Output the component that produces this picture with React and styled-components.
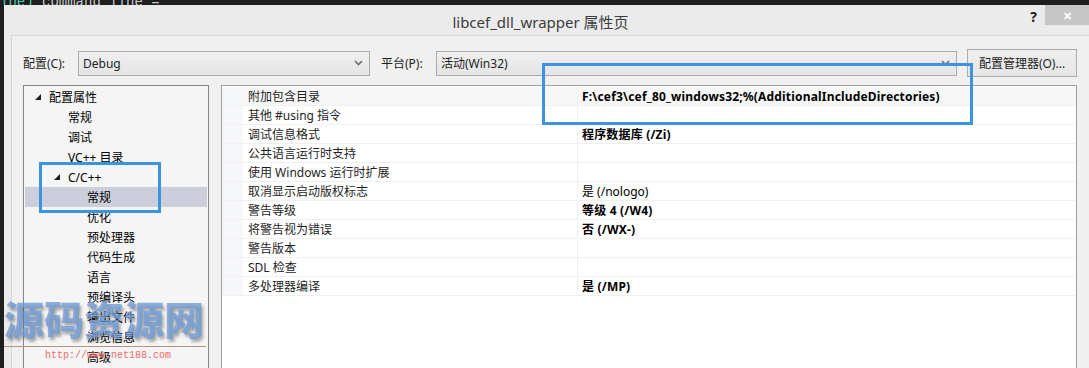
import styled, { createGlobalStyle } from 'styled-components';

const UI_FONT = `"Segoe UI", "Noto Sans", "Noto Sans CJK SC", sans-serif`;

const GlobalStyle = createGlobalStyle`
    html, body {
        margin: 0;
        padding: 0;
        width: 1089px;
        height: 368px;
        overflow: hidden;
        background: #1e1e1e;
    }
    * { box-sizing: border-box; }
`;

const treeItems = [
    { label: "配置属性", level: 0, open: true },
    { label: "常规", level: 1 },
    { label: "调试", level: 1 },
    { label: "VC++ 目录", level: 1 },
    { label: "C/C++", level: 1, open: true },
    { label: "常规", level: 2, selected: true },
    { label: "优化", level: 2 },
    { label: "预处理器", level: 2 },
    { label: "代码生成", level: 2 },
    { label: "语言", level: 2 },
    { label: "预编译头", level: 2 },
    { label: "输出文件", level: 2 },
    { label: "浏览信息", level: 2 },
    { label: "高级", level: 2 },
];

const props = [
    ["附加包含目录", "F:\\cef3\\cef_80_windows32;%(AdditionalIncludeDirectories)", true],
    ["其他 #using 指令", "", false],
    ["调试信息格式", "程序数据库 (/Zi)", true],
    ["公共语言运行时支持", "", false],
    ["使用 Windows 运行时扩展", "", false],
    ["取消显示启动版权标志", "是 (/nologo)", false],
    ["警告等级", "等级 4 (/W4)", true],
    ["将警告视为错误", "否 (/WX-)", true],
    ["警告版本", "", false],
    ["SDL 检查", "", false],
    ["多处理器编译", "是 (/MP)", true],
];

function Triangle() {
    return (
        <svg width="6" height="6" viewBox="0 0 6 6">
            <polygon points="6,0 6,6 0,6" fill="#1e1e1e" />
        </svg>
    );
}

function Chevron() {
    return (
        <svg width="9" height="6" viewBox="0 0 9 6">
            <polyline points="1,1 4.5,4.5 8,1" fill="none" stroke="#6d6d6d" strokeWidth="1.6" />
        </svg>
    );
}

export default function App() {
    return (
        <Page>
            <GlobalStyle />
            <TopStrip>
                <span className="green">ine)</span> command line =
            </TopStrip>
            <Desk>
                <LeftStrip />
                <Window>
                    <TitleBar>
                        <Title>libcef_dll_wrapper 属性页</Title>
                        <Help>?</Help>
                        <Close>✕</Close>
                    </TitleBar>
                    <Body>
                        <Toolbar>
                            <Label>配置(C):</Label>
                            <Select width={292}>
                                <span>Debug</span>
                                <Chevron />
                            </Select>
                            <Label style={{ marginLeft: 11 }}>平台(P):</Label>
                            <Select width={521}>
                                <span>活动(Win32)</span>
                                <Chevron />
                            </Select>
                            <Button>配置管理器(O)...</Button>
                        </Toolbar>
                        <Panels>
                            <Tree>
                                {treeItems.map((it, i) => (
                                    <TreeRow key={i} level={it.level} selected={it.selected}>
                                        <Twisty>{it.open && <Triangle />}</Twisty>
                                        {it.label}
                                    </TreeRow>
                                ))}
                            </Tree>
                            <Grid>
                                {props.map(([name, value, bold], i) => (
                                    <PropRow key={i} first={i === 0}>
                                        <Margin />
                                        <NameCell>{name}</NameCell>
                                        <ValueCell bold={bold}>{value}</ValueCell>
                                    </PropRow>
                                ))}
                            </Grid>
                        </Panels>
                    </Body>
                </Window>
            </Desk>

            <Mark left={39} top={162} width={122} height={51} />
            <Mark left={542} top={63} width={431} height={62} />

            <Watermark>
                <Big>源码资源网</Big>
                <Rule />
                <Url>http://www.net188.com</Url>
            </Watermark>
        </Page>
    );
}

/* --- STYLES --- */
const Page = styled.div`
    position: relative;
    width: 1089px;
    height: 368px;
    overflow: hidden;
    background: #1e1e1e;
    font-family: ${UI_FONT};
    display: flex;
    flex-direction: column;
`;

const TopStrip = styled.div`
    height: 5px;
    overflow: hidden;
    padding-left: 0;
    font-family: "Liberation Mono", monospace;
    font-size: 14px;
    line-height: 4px;
    color: #c8c8c8;
    white-space: pre;
    .green { color: #4ec9b0; }
`;

const Desk = styled.div`
    flex: 1;
    display: flex;
    min-height: 0;
`;

const LeftStrip = styled.div`
    width: 4px;
    background: #1e1e1e;
`;

const Window = styled.div`
    flex: 1;
    display: flex;
    flex-direction: column;
    background: #ebebeb;
    padding-left: 7px;
`;

const TitleBar = styled.div`
    position: relative;
    height: 30px;
    margin-left: -7px;
    display: flex;
    justify-content: center;
    align-items: center;
`;

const Title = styled.div`
    font-size: 15px;
    color: #3c3c3c;
    padding-right: 12px;
    margin-top: 2px;
`;

const Help = styled.div`
    position: absolute;
    right: 52px;
    top: 2px;
    font-size: 14px;
    font-weight: 700;
    color: #202020;
`;

const Close = styled.div`
    position: absolute;
    right: 0;
    top: 0;
    width: 44px;
    height: 20px;
    background: #c6c6c6;
    color: #fff;
    font-size: 11px;
    font-weight: 700;
    display: flex;
    align-items: center;
    justify-content: center;
`;

const Body = styled.div`
    flex: 1;
    background: #f0f0f0;
    border-top: 1px solid #d8d8d8;
    border-left: 1px solid #d8d8d8;
    padding: 13px 12px 0 11px;
    display: flex;
    flex-direction: column;
    min-height: 0;
`;

const Toolbar = styled.div`
    display: flex;
    align-items: center;
    height: 28px;
`;

const Label = styled.div`
    font-size: 12px;
    color: #1e1e1e;
    width: 55px;
`;

const Select = styled.div`
    width: ${p => p.width}px;
    height: 25px;
    border: 1px solid #acacac;
    background: linear-gradient(#efefef, #e5e5e5);
    display: flex;
    align-items: center;
    justify-content: space-between;
    padding: 0 6px 0 4px;
    font-size: 12px;
    color: #1e1e1e;
`;

const Button = styled.div`
    margin-left: auto;
    width: 110px;
    height: 28px;
    border: 1px solid #acacac;
    background: linear-gradient(#efefef, #e5e5e5);
    font-size: 12px;
    color: #1e1e1e;
    display: flex;
    align-items: center;
    justify-content: center;
`;

const Panels = styled.div`
    flex: 1;
    display: flex;
    gap: 12px;
    margin-top: 8px;
    min-height: 0;
`;

const Tree = styled.div`
    width: 186px;
    border: 1px solid #828790;
    border-bottom: none;
    background: #f5f5f5;
    padding: 1px 1px 0;
    font-size: 12px;
    color: #000;
`;

const TreeRow = styled.div`
    height: 20px;
    display: flex;
    align-items: center;
    padding-left: ${p => 10 + p.level * 19}px;
    background: ${p => (p.selected ? "#cccedb" : "transparent")};
`;

const Twisty = styled.span`
    width: 14px;
    display: inline-flex;
    align-items: center;
    margin-top: -1px;
`;

const Grid = styled.div`
    flex: 1;
    border: 1px solid #a0a0a0;
    border-bottom: none;
    background: #fff;
    padding-top: 1px;
    font-size: 12px;
    color: #1e1e1e;
`;

const PropRow = styled.div`
    height: 19px;
    display: flex;
    border-bottom: 1px solid #f0f0f0;
    background: ${p => (p.first ? "#f7f7f7" : "#fff")};
`;

const Margin = styled.div`
    width: 21px;
    background: #f5f7fb;
`;

const NameCell = styled.div`
    width: 335px;
    padding-left: 5px;
    display: flex;
    align-items: center;
    border-right: 1px solid #f0f0f0;
`;

const ValueCell = styled.div`
    flex: 1;
    padding-left: 4px;
    display: flex;
    align-items: center;
    font-weight: ${p => (p.bold ? 700 : 400)};
    letter-spacing: ${p => (p.bold ? "0.18px" : "0")};
    color: #000;
`;

const Mark = styled.div`
    position: absolute;
    left: ${p => p.left}px;
    top: ${p => p.top}px;
    width: ${p => p.width}px;
    height: ${p => p.height}px;
    border: 3px solid #3a94e0;
    pointer-events: none;
`;

const Watermark = styled.div`
    position: absolute;
    left: 4px;
    top: 292px;
    width: 202px;
    display: flex;
    flex-direction: column;
    align-items: stretch;
    pointer-events: none;
`;

const Big = styled.div`
    font-family: "Noto Sans CJK SC", sans-serif;
    font-weight: 900;
    font-size: 40px;
    line-height: 52px;
    letter-spacing: 0;
    color: rgba(112, 155, 212, 0.8);
    text-shadow: 2px 3px 3px rgba(0, 0, 0, 0.3);
    white-space: nowrap;
`;

const Rule = styled.div`
    height: 1px;
    background: #b8937a;
    margin-top: 2px;
`;

const Url = styled.div`
    font-family: "Liberation Mono", monospace;
    font-size: 10px;
    line-height: 14px;
    color: #f06a6a;
    padding-left: 41px;
    margin-top: 2px;
`;
